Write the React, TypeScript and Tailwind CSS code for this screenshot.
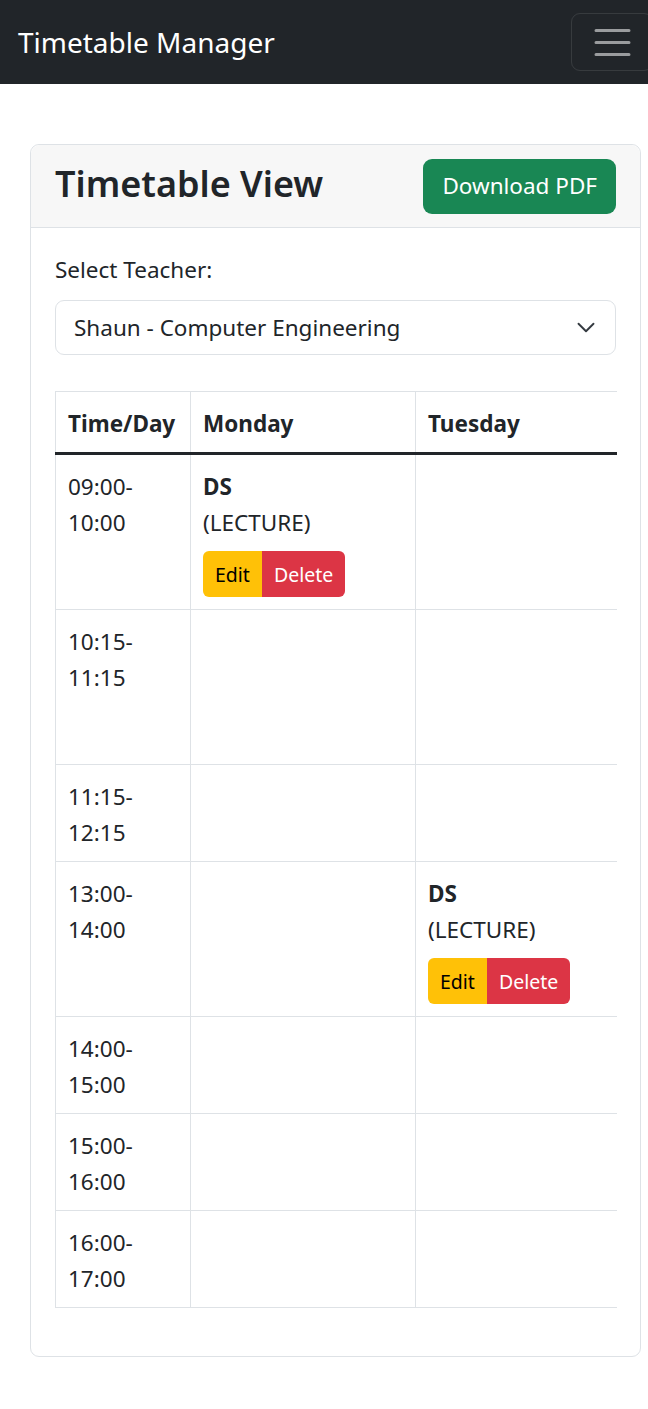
import React from 'react';

type Lesson = { subject: string; kind: string };
type Slot = { time: [string, string]; cells: Record<string, Lesson | undefined> };

const days = ['Monday', 'Tuesday', 'Wednesday', 'Thursday', 'Friday'];

const slots: Slot[] = [
  { time: ['09:00-', '10:00'], cells: { Monday: { subject: 'DS', kind: 'LECTURE' } } },
  { time: ['10:15-', '11:15'], cells: { Thursday: { subject: 'DS', kind: 'LECTURE' } } },
  { time: ['11:15-', '12:15'], cells: {} },
  { time: ['13:00-', '14:00'], cells: { Tuesday: { subject: 'DS', kind: 'LECTURE' } } },
  { time: ['14:00-', '15:00'], cells: {} },
  { time: ['15:00-', '16:00'], cells: {} },
  { time: ['16:00-', '17:00'], cells: {} },
];

const App: React.FC = () => {
  return (
    <div className="min-h-screen w-[648px] overflow-hidden bg-white font-['Noto_Sans',sans-serif] text-[22.5px] leading-[36px] text-[#212529]">
      <nav className="flex h-[84px] items-center justify-between bg-[#212529] pl-[18px]">
        <span className="text-[28px] leading-[45px] text-white">Timetable Manager</span>
        <button className="mr-[-5px] flex h-[58px] w-[82px] shrink-0 items-center rounded-[9px] border border-white/10 pl-[18px]">
          <svg width="45" height="45" viewBox="0 0 30 30">
            <path d="M4 7h22M4 15h22M4 23h22" stroke="rgba(255,255,255,0.55)" strokeWidth="2" strokeLinecap="round" />
          </svg>
        </button>
      </nav>

      <main className="pl-[30px] pt-[60px]">
        <div className="w-[611px] rounded-[9px] border border-[#dee2e6]">
          <div className="flex h-[83px] items-center justify-between rounded-t-[9px] border-b border-[#dee2e6] bg-[#f7f7f7] px-[24px]">
            <h2 className="mt-[-5px] text-[36px] font-semibold leading-[45px]">Timetable View</h2>
            <button className="h-[55px] rounded-[9px] bg-[#198754] px-[19px] text-[22.5px] text-white">Download PDF</button>
          </div>

          <div className="p-[24px]">
            <label className="mb-[12px] block">Select Teacher:</label>
            <div className="mb-[36px] flex h-[55px] items-center justify-between rounded-[9px] border border-[#dee2e6] pl-[18px] pr-[19px]">
              <span>Shaun - Computer Engineering</span>
              <svg width="20" height="15" viewBox="0 0 16 12" fill="none">
                <path d="m2 3 6 6 6-6" stroke="#343a40" strokeWidth="1.5" strokeLinecap="round" strokeLinejoin="round" />
              </svg>
            </div>

            <div className="mb-[24px] w-[562px] overflow-hidden">
              <table className="w-[1260px] table-fixed border-collapse">
                <colgroup>
                  <col className="w-[135px]" />
                  {days.map((d) => (
                    <col key={d} className="w-[225px]" />
                  ))}
                </colgroup>
                <thead>
                  <tr className="border-b-[3px] border-b-[#212529]">
                    <th className="border border-[#dee2e6] border-b-[#212529] px-[12px] pt-[14px] pb-[10px] text-left font-bold">Time/Day</th>
                    {days.map((d) => (
                      <th key={d} className="border border-[#dee2e6] border-b-[#212529] px-[12px] pt-[14px] pb-[10px] text-left font-bold">
                        {d}
                      </th>
                    ))}
                  </tr>
                </thead>
                <tbody>
                  {slots.map((slot) => (
                    <tr key={slot.time[0]}>
                      <td className="border border-[#dee2e6] px-[12px] pt-[14px] pb-[10px] align-top">
                        {slot.time[0]}
                        <br />
                        {slot.time[1]}
                      </td>
                      {days.map((d) => {
                        const c = slot.cells[d];
                        return (
                          <td key={d} className="border border-[#dee2e6] px-[12px] pt-[14px] pb-[10px] align-top">
                            {c && (
                              <div>
                                <div className="font-bold">{c.subject}</div>
                                <div>({c.kind})</div>
                                <div className="mt-[10px] mb-[2px] flex text-[19.5px] leading-[31px]">
                                  <button className="h-[46px] rounded-l-[6px] bg-[#ffc107] px-[12px] text-black">Edit</button>
                                  <button className="h-[46px] rounded-r-[6px] bg-[#dc3545] px-[12px] text-white">Delete</button>
                                </div>
                              </div>
                            )}
                          </td>
                        );
                      })}
                    </tr>
                  ))}
                </tbody>
              </table>
            </div>
          </div>
        </div>
      </main>
      <div className="h-[53px]" />
    </div>
  );
};

export default App;
